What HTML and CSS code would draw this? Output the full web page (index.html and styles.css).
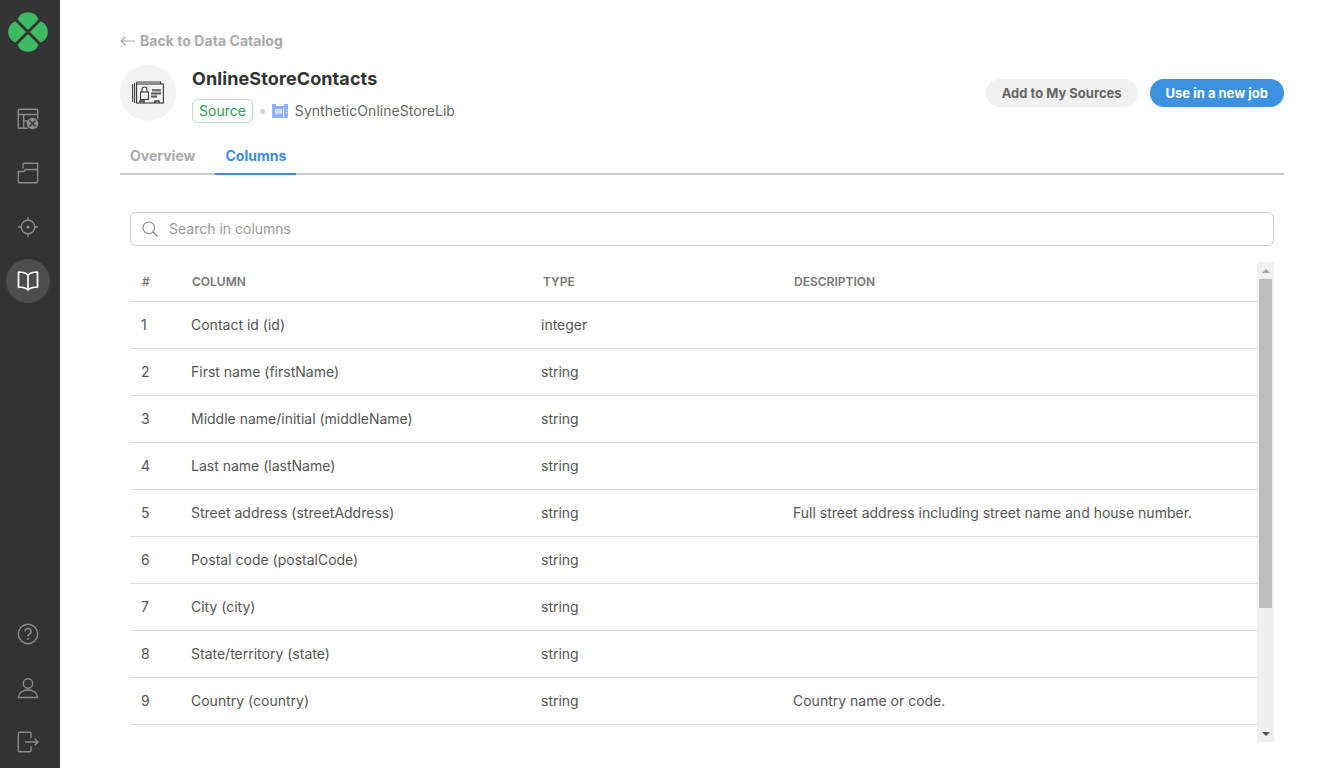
FILE: index.html
```html
<!DOCTYPE html>
<html lang="en">
<head>
    <meta charset="UTF-8">
    <meta name="viewport" content="width=device-width, initial-scale=1.0">
    <title>OnlineStoreContacts | Data Catalog</title>
    <link rel="stylesheet" href="styles.css">
</head>
<body>
    <nav class="sidebar">
        <svg class="logo" width="40" height="40" viewBox="0 0 40 40">
            <path fill="#3cbb63" d="M20 18 L9.600 7.600 C10.500 3.400 15 0.200 20 0.200 C25 0.200 29.500 3.400 30.400 7.600 Z"/>
            <path fill="#3cbb63" d="M22 20 L32.400 9.600 C36.600 10.500 39.800 15 39.800 20 C39.800 25 36.600 29.500 32.400 30.400 Z"/>
            <path fill="#3cbb63" d="M20 22 L30.400 32.400 C29.500 36.600 25 39.800 20 39.800 C15 39.800 10.500 36.600 9.600 32.400 Z"/>
            <path fill="#3cbb63" d="M18 20 L7.600 30.400 C3.400 29.500 0.200 25 0.200 20 C0.200 15 3.400 10.500 7.600 9.600 Z"/>
        </svg>
        <div class="nav-top">
            <a class="nav-item">
                <svg width="22" height="22" viewBox="0 0 22 22" fill="none" stroke="#8c8c8c" stroke-width="1.400">
                    <path d="M11 20.300H2.500a1.200 1.200 0 0 1-1.200-1.200V2.500a1.200 1.200 0 0 1 1.200-1.200h17a1.200 1.200 0 0 1 1.200 1.200V11"/>
                    <path d="M1.300 6.500h19.400M6.700 6.500v13.800M6.700 13h4"/>
                    <circle cx="15.500" cy="15.500" r="5.800" fill="#8c8c8c" stroke="none"/>
                    <path d="M12.500 12.500l6 6M18.500 12.500l-6 6" stroke="#333"/>
                </svg>
            </a>
            <a class="nav-item">
                <svg width="22" height="22" viewBox="0 0 22 22" fill="none" stroke="#8c8c8c" stroke-width="1.400">
                    <path d="M1.300 9.500h5.500l1.800-2h12v12a1.200 1.200 0 0 1-1.200 1.200H2.500a1.200 1.200 0 0 1-1.200-1.200z"/>
                    <path d="M6 6.500V2.500a1.200 1.200 0 0 1 1.200-1.200h13.500v6.200"/>
                </svg>
            </a>
            <a class="nav-item">
                <svg width="22" height="22" viewBox="0 0 22 22" fill="none" stroke="#8c8c8c" stroke-width="1.400">
                    <circle cx="11" cy="11" r="6.800"/>
                    <circle cx="11" cy="11" r="1.600" fill="#8c8c8c" stroke="none"/>
                    <path d="M11 1v3.400M11 17.600V21M1 11h3.400M17.600 11H21"/>
                </svg>
            </a>
            <a class="nav-item active">
                <svg width="22" height="22" viewBox="0 0 22 22" fill="none" stroke="#fff" stroke-width="1.700" stroke-linejoin="round">
                    <path d="M11 5C9 3 5.500 2 1.500 2v15c4 0 7.500 1 9.500 3 2-2 5.500-3 9.500-3V2c-4 0-7.500 1-9.500 3z"/>
                    <path d="M11 5v15"/>
                </svg>
            </a>
        </div>
        <div class="nav-bottom">
            <a class="nav-item">
                <svg width="22" height="22" viewBox="0 0 22 22" fill="none" stroke="#8c8c8c" stroke-width="1.400">
                    <circle cx="11" cy="11" r="9.700"/>
                    <path d="M8 8.500a3 3 0 1 1 4.600 2.500c-1 .7-1.600 1.300-1.600 2.500" stroke-width="1.600"/>
                    <circle cx="11" cy="16" r="1" fill="#8c8c8c" stroke="none"/>
                </svg>
            </a>
            <a class="nav-item">
                <svg width="22" height="22" viewBox="0 0 22 22" fill="none" stroke="#8c8c8c" stroke-width="1.400">
                    <circle cx="11" cy="6.500" r="4.700"/>
                    <path d="M1.500 20.500c0-4.500 4-7.500 9.500-7.500s9.500 3 9.500 7.500z"/>
                </svg>
            </a>
            <a class="nav-item">
                <svg width="22" height="22" viewBox="0 0 22 22" fill="none" stroke="#8c8c8c" stroke-width="1.400">
                    <path d="M14 7V2.500a1.200 1.200 0 0 0-1.200-1.200H2.500a1.200 1.200 0 0 0-1.200 1.200v17a1.200 1.200 0 0 0 1.200 1.200h10.300a1.200 1.200 0 0 0 1.200-1.200V15"/>
                    <path d="M8 11h13M17.500 7.500 21 11l-3.500 3.500"/>
                </svg>
            </a>
        </div>
    </nav>

    <main class="content">
        <a class="back-link">
            <svg width="15" height="10" viewBox="0 0 15 10" fill="none" stroke="#aaa" stroke-width="1.200"><path d="M15 5H1M5.500 .7 1 5l4.500 4.300"/></svg>
            Back to Data Catalog
        </a>

        <header class="source-head">
            <div class="source-icon">
                <svg width="32" height="24" viewBox="0 0 32 24" fill="none" stroke="#3a3a3a" stroke-width="1.100">
                    <path d="M.6 3v18M2.600 2v20"/>
                    <path d="M4.600 1v21M4.600 1h24v2"/>
                    <rect x="4.600" y="3" width="26.800" height="19" fill="#f2f2f2"/>
                    <rect x="8.500" y="11" width="8" height="7.500" fill="#f2f2f2"/>
                    <path d="M10 11V8.500a2.500 2.500 0 0 1 5 0V11"/>
                    <rect x="20" y="8" width="9" height="2.500" fill="#777" stroke="none"/>
                    <rect x="19" y="11.500" width="10" height="2" fill="#555" stroke="none"/>
                    <rect x="19" y="14.500" width="6" height="2" fill="#555" stroke="none"/>
                    <path d="M8 22v-2h4v2M23 22v-2h4v2" stroke-width="1.400"/>
                </svg>
            </div>
            <div class="source-info">
                <h1>OnlineStoreContacts</h1>
                <div class="source-meta">
                    <span class="badge">Source</span>
                    <span class="dot"></span>
                    <svg class="lib-icon" width="16" height="15" viewBox="0 0 16 15">
                        <rect x="0" y="2" width="16" height="12" fill="#8fb3ee"/>
                        <path d="M0 0h4v3H0zM12 0h4v3h-4z" fill="#8fb3ee"/>
                        <rect x="3" y="5" width="7" height="5" fill="#cfdffa"/>
                        <path d="M11.500 4v9M13.500 6h2M13.500 9h2" stroke="#e4edfc" stroke-width="1"/>
                    </svg>
                    <span class="lib-name">SyntheticOnlineStoreLib</span>
                </div>
            </div>
            <div class="actions">
                <button class="btn btn-grey">Add to My Sources</button>
                <button class="btn btn-blue">Use in a new job</button>
            </div>
        </header>

        <div class="tabs">
            <a class="tab">Overview</a>
            <a class="tab active">Columns</a>
        </div>

        <div class="search">
            <svg width="16" height="16" viewBox="0 0 16 16" fill="none" stroke="#8a8a8a" stroke-width="1.200"><circle cx="6.800" cy="6.800" r="5.800"/><path d="M11 11l4.500 4.500"/></svg>
            <span>Search in columns</span>
        </div>

        <div class="table-wrap">
            <div class="table-scroll">
                <table>
                    <thead>
                        <tr><th>#</th><th>Column</th><th>Type</th><th>Description</th></tr>
                    </thead>
                    <tbody>
                        <tr><td>1</td><td>Contact id (id)</td><td>integer</td><td></td></tr>
                        <tr><td>2</td><td>First name (firstName)</td><td>string</td><td></td></tr>
                        <tr><td>3</td><td>Middle name/initial (middleName)</td><td>string</td><td></td></tr>
                        <tr><td>4</td><td>Last name (lastName)</td><td>string</td><td></td></tr>
                        <tr><td>5</td><td>Street address (streetAddress)</td><td>string</td><td>Full street address including street name and house number.</td></tr>
                        <tr><td>6</td><td>Postal code (postalCode)</td><td>string</td><td></td></tr>
                        <tr><td>7</td><td>City (city)</td><td>string</td><td></td></tr>
                        <tr><td>8</td><td>State/territory (state)</td><td>string</td><td></td></tr>
                        <tr><td>9</td><td>Country (country)</td><td>string</td><td>Country name or code.</td></tr>
                    </tbody>
                </table>
            </div>
            <div class="scrollbar">
                <span class="arrow arrow-up"></span>
                <div class="track"><div class="thumb"></div></div>
                <span class="arrow arrow-down"></span>
            </div>
        </div>
    </main>
</body>
</html>
```

FILE: styles.css
```css
* {
    box-sizing: border-box;
}
html, body {
    height: 100%;
}
body {
    margin: 0;
    display: flex;
    height: 768px;
    overflow: hidden;
    background-color: #fff;
    color: #555;
    font-family: Inter, "Liberation Sans", sans-serif;
    font-size: 14px;
}

/* sidebar */
.sidebar {
    width: 60px;
    flex-shrink: 0;
    display: flex;
    flex-direction: column;
    align-items: center;
    background-color: #333;
    padding: 12px 4px 0 0;
}
.logo {
    display: block;
}
.nav-top {
    margin-top: 45px;
    display: flex;
    flex-direction: column;
    gap: 10px;
}
.nav-bottom {
    margin-top: auto;
    padding-bottom: 4px;
    display: flex;
    flex-direction: column;
    gap: 10px;
}
.nav-item {
    width: 44px;
    height: 44px;
    display: flex;
    align-items: center;
    justify-content: center;
    border-radius: 50%;
}
.nav-item.active {
    background-color: #4d4d4d;
}

/* main */
.content {
    flex: 1;
    min-width: 0;
    padding: 32px 59px 0 60px;
}
.back-link {
    display: flex;
    align-items: center;
    gap: 5px;
    height: 17px;
    font-size: 14px;
    font-weight: 700;
    letter-spacing: .05px;
    color: #aaa;
}
.source-head {
    display: flex;
    align-items: flex-start;
    margin-top: 16px;
}
.source-icon {
    width: 56px;
    height: 56px;
    flex-shrink: 0;
    display: flex;
    align-items: center;
    justify-content: center;
    border-radius: 50%;
    background-color: #f2f2f2;
}
.source-info {
    margin-left: 16px;
    padding-top: 4px;
}
.source-info h1 {
    margin: 0 0 10px;
    font-size: 18px;
    line-height: 20px;
    font-weight: 700;
    letter-spacing: .1px;
    color: #333;
}
.source-meta {
    display: flex;
    align-items: center;
}
.badge {
    height: 24px;
    padding: 0 6px 1px;
    display: flex;
    align-items: center;
    border: 1px solid #b7e2c4;
    border-radius: 6px;
    color: #2f9e55;
    font-size: 14px;
}
.dot {
    width: 5px;
    height: 5px;
    margin: 0 7px 0 7px;
    border-radius: 50%;
    background-color: #d4d4d4;
}
.lib-icon {
    flex-shrink: 0;
}
.lib-name {
    margin-left: 7px;
    padding-bottom: 1px;
    letter-spacing: .04px;
    color: #666;
}
.actions {
    margin: 14px 0 0 auto;
    display: flex;
    gap: 12px;
}
.btn {
    height: 28px;
    padding: 0 16px;
    border: 0;
    border-radius: 14px;
    font-family: inherit;
    font-size: 13px;
    font-weight: 700;
}
.btn-grey {
    background-color: #f1f1f1;
    color: #666;
}
.btn-blue {
    background-color: #3b92e0;
    color: #fff;
}

/* tabs */
.tabs {
    display: flex;
    gap: 10px;
    margin-top: 17px;
    border-bottom: 2px solid #c8c8c8;
    height: 35px;
}
.tab {
    height: 35px;
    padding: 0 10px;
    line-height: 31px;
    font-weight: 700;
    color: #aaa;
}
.tab.active {
    border-bottom: 2px solid #3b8de0;
    color: #3b8de0;
}

/* search */
.search {
    display: flex;
    align-items: center;
    gap: 11px;
    height: 34px;
    margin: 37px 10px 0;
    padding: 0 11px 1px;
    border: 1px solid #ccc;
    border-radius: 6px;
    color: #999;
}

/* table */
.table-wrap {
    display: flex;
    height: 480px;
    margin: 16px 10px 0;
}
.table-scroll {
    flex: 1;
    min-width: 0;
    overflow: hidden;
}
table {
    width: 100%;
    table-layout: fixed;
    border-collapse: collapse;
}
thead th {
    height: 39px;
    padding: 0 0 0 1px;
    border-bottom: 1px solid #ddd;
    text-align: left;
    font-size: 12px;
    font-weight: 600;
    text-transform: uppercase;
    color: #777;
}
th:nth-child(1), td:nth-child(1) {
    width: 61px;
    padding-left: 11px;
}
thead th:nth-child(1) {
    padding-left: 12px;
}
th:nth-child(2) {
    width: 350px;
}
thead th:nth-child(3) {
    width: 252px;
    padding-left: 2px;
}
tbody td {
    height: 47px;
    padding: 0;
    border-bottom: 1px solid #ddd;
    color: #555;
}
tbody td:nth-child(1) {
    padding-left: 11px;
}

/* scrollbar */
.scrollbar {
    width: 17px;
    flex-shrink: 0;
    display: flex;
    flex-direction: column;
    background-color: #f0f0f0;
}
.arrow {
    height: 17px;
    flex-shrink: 0;
    display: flex;
    align-items: center;
    justify-content: center;
}
.arrow::before {
    content: "";
    border-left: 4px solid transparent;
    border-right: 4px solid transparent;
}
.arrow-up::before {
    border-bottom: 4px solid #a3a3a3;
}
.arrow-down::before {
    border-top: 4px solid #505050;
}
.track {
    flex: 1;
}
.thumb {
    width: 13px;
    height: 329px;
    margin: 0 2px;
    background-color: #bdbdbd;
}
```
